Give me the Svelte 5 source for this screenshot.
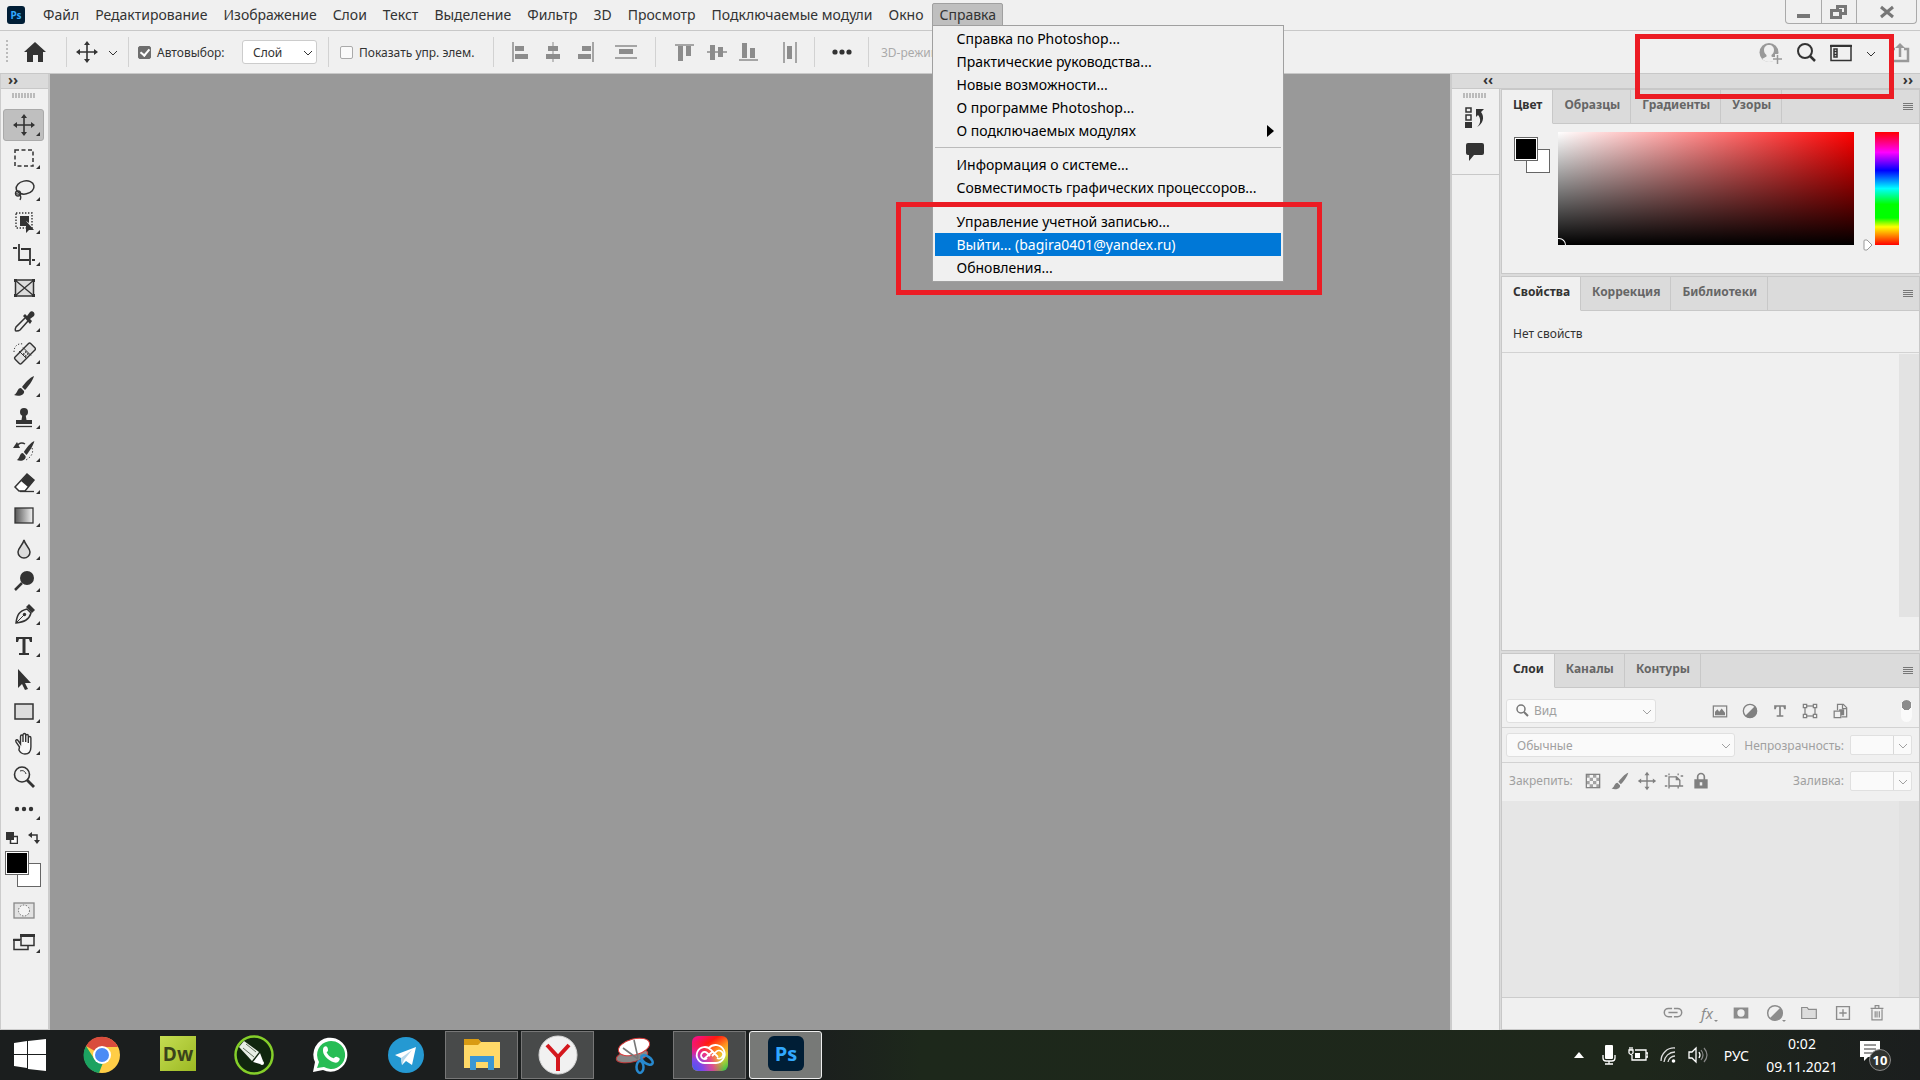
<script lang="ts">
  type Item = { label: string; icon: string; more?: boolean };

  const menus = [
    "Файл",
    "Редактирование",
    "Изображение",
    "Слои",
    "Текст",
    "Выделение",
    "Фильтр",
    "3D",
    "Просмотр",
    "Подключаемые модули",
    "Окно",
  ];

  const helpGroups = [
    [
      "Справка по Photoshop...",
      "Практические руководства...",
      "Новые возможности...",
      "О программе Photoshop...",
      "О подключаемых модулях",
    ],
    ["Информация о системе...", "Совместимость графических процессоров..."],
    [
      "Управление учетной записью...",
      "Выйти... (bagira0401@yandex.ru)",
      "Обновления...",
    ],
  ];
  const submenu = "О подключаемых модулях";
  const selected = "Выйти... (bagira0401@yandex.ru)";

  const move =
    '<path d="M12 4v16M4 12h16" stroke="currentColor" stroke-width="1.6"/><path d="M12 1l3 4H9zM12 23l3-4H9zM1 12l4-3v6zM23 12l-4-3v6z" fill="currentColor"/>';
  const brush =
    '<path d="M22 2c-4 1-10 8-12 11l3 3C16 13 21 6 22 2z" fill="currentColor"/><path d="M9 14c-4 0-3 5-7 7 5 2 11 0 10-4z" fill="currentColor"/>';
  const halfCircle =
    '<circle cx="12" cy="12" r="8" fill="none" stroke="currentColor" stroke-width="1.6"/><path d="M18 6A8.500 8.500 0 0 1 6 18z" fill="currentColor"/>';

  const tools: Item[] = [
    { label: "Перемещение", more: true, icon: move },
    {
      label: "Прямоугольная область",
      more: true,
      icon: '<rect x="3" y="4" width="18" height="16" fill="none" stroke="currentColor" stroke-width="1.500" stroke-dasharray="4 2.500"/>',
    },
    {
      label: "Лассо",
      more: true,
      icon: '<ellipse cx="13" cy="9.500" rx="9" ry="6.500" transform="rotate(-12 13 9)" fill="none" stroke="currentColor" stroke-width="1.500"/><circle cx="6" cy="15.500" r="2.500" fill="none" stroke="currentColor" stroke-width="1.300"/><path d="M3 16c5-1 7 2 5 6" fill="none" stroke="currentColor" stroke-width="1.300"/>',
    },
    {
      label: "Выделение объектов",
      more: true,
      icon: '<rect x="4" y="2" width="16" height="15" fill="none" stroke="currentColor" stroke-width="1.400" stroke-dasharray="1.400 1.600"/><path d="M8 5h9v7l-3-2v5H8z" fill="currentColor"/><path d="M14 10v12l3-3h5z" fill="currentColor"/>',
    },
    {
      label: "Рамка",
      more: true,
      icon: '<path d="M1 5h4M7 1v16h10M9 6h9v16M20 17h3" fill="none" stroke="currentColor" stroke-width="1.800"/>',
    },
    {
      label: "Кадр",
      icon: '<rect x="3.500" y="4" width="18" height="16" fill="#dcdcdc" stroke="currentColor" stroke-width="1.500"/><path d="M3 4l19 16M22 4L3 20" stroke="currentColor" stroke-width="1.300"/><path d="M2 3h3v3H2zM20 3h3v3h-3zM2 18h3v3H2zM20 18h3v3h-3z" fill="currentColor"/>',
    },
    {
      label: "Пипетка",
      more: true,
      icon: '<path d="M13 9L4 18c-1 2-1 4 0 4s3 0 4-1l8-9" fill="none" stroke="currentColor" stroke-width="1.500"/><path d="M11 7l2-2 2 2 3-4c2-2 6 1 4 4l-4 3 2 2-2 3z" fill="currentColor"/>',
    },
    {
      label: "Восстанавливающая кисть",
      more: true,
      icon: '<rect x="2" y="8" width="22" height="9" rx="1.500" transform="rotate(-45 13 12.500)" fill="#e2e2e2" stroke="currentColor" stroke-width="1.400"/><path d="M9 9l8 8M13 5.500l8 8" transform="translate(-2 1)" stroke="currentColor"/><path d="M11 13h1.500M13 11h1.500M13 15h1.500M15 13h1.500" stroke="currentColor" stroke-width="1.500"/><path d="M2 11c0-6 4-9 9-8" fill="none" stroke="currentColor" stroke-dasharray="1.200 1.800"/>',
    },
    { label: "Кисть", more: true, icon: brush },
    {
      label: "Штамп",
      more: true,
      icon: '<circle cx="12" cy="6" r="4" fill="currentColor"/><path d="M10.500 8h3l1 6H20v4H4v-4h5.500z" fill="currentColor"/><path d="M4 20.500h16" stroke="currentColor" stroke-width="1.300"/>',
    },
    {
      label: "Архивная кисть",
      more: true,
      icon: '<g transform="translate(3 0) scale(.88 1)">' +
        brush +
        '</g><path d="M4 8c2-4 6-5 9-3" fill="none" stroke="currentColor" stroke-width="1.400"/><path d="M1 9l4-6 3 6z" fill="currentColor"/><path d="M20 9c2 5-1 9-6 12" fill="none" stroke="currentColor" stroke-dasharray="1.300 2"/>',
    },
    {
      label: "Ластик",
      more: true,
      icon: '<path d="M3 16L15 3l7 6-9 11H7z" fill="#fff" stroke="currentColor" stroke-width="1.500"/><path d="M9 10l6-7 7 6-6 7z" fill="currentColor"/><path d="M8 20.500h14" stroke="currentColor" stroke-width="1.300"/>',
    },
    {
      label: "Градиент",
      more: true,
      icon: '<defs><linearGradient id="toolGradient"><stop stop-color="#555"/><stop offset="1" stop-color="#f5f5f5"/></linearGradient></defs><rect x="3" y="4" width="18" height="15" fill="url(#toolGradient)" stroke="currentColor" stroke-width="1.300"/>',
    },
    {
      label: "Размытие",
      more: true,
      icon: '<path d="M12 3c1 5 6 8 6 12a6 6 0 0 1-12 0c0-4 5-7 6-12z" fill="#dcdcdc" stroke="currentColor" stroke-width="1.500"/>',
    },
    {
      label: "Осветлитель",
      more: true,
      icon: '<circle cx="15" cy="9" r="7" fill="currentColor"/><path d="M10 14l-7 7" stroke="currentColor" stroke-width="2.500"/>',
    },
    {
      label: "Перо",
      more: true,
      icon: '<path d="M4 21c1-8 3-12 11-14l4 4c-2 7-7 9-15 10z" fill="none" stroke="currentColor" stroke-width="1.500"/><path d="M4 21l8-8" stroke="currentColor"/><circle cx="12.500" cy="12.500" r="1.700" fill="currentColor"/><path d="M14 5l3-3 6 6-3 3z" fill="currentColor"/>',
    },
    {
      label: "Горизонтальный текст",
      more: true,
      icon: '<path d="M4 3h16v5h-2l-1-3h-3.500v14H17v2H7v-2h3.500V5H7L6 8H4z" fill="currentColor"/>',
    },
    {
      label: "Выделение контура",
      more: true,
      icon: '<path d="M6 2v19l4-4 3 6 3-1-3-6h6z" fill="currentColor"/>',
    },
    {
      label: "Прямоугольник",
      more: true,
      icon: '<rect x="3" y="4" width="18" height="15" fill="#dcdcdc" stroke="currentColor" stroke-width="1.500"/>',
    },
    {
      label: "Рука",
      more: true,
      icon: '<path d="M6.500 15L3 10c-1-2 1-3 2-1.500L7.500 12V4.500c0-2 2.500-2 2.500 0V10 3c0-2 2.700-2 2.700 0v7V4c0-2 2.600-2 2.600 0v7-5c0-2 2.600-2 2.600 0v9c0 4-2 7-6 7-3 0-5-2-6-4z" transform="translate(1 0)" fill="#f8f8f8" stroke="currentColor" stroke-width="1.400"/>',
    },
    {
      label: "Масштаб",
      icon: '<circle cx="10" cy="9.500" r="7.500" fill="none" stroke="currentColor" stroke-width="1.600"/><path d="M8 6c3-1 5 0 6 3" fill="none" stroke="currentColor"/><path d="M15 15l7 7" stroke="currentColor" stroke-width="2.800"/>',
    },
    {
      label: "Редактировать панель инструментов",
      more: true,
      icon: '<circle cx="5" cy="12" r="2.200" fill="currentColor"/><circle cx="12" cy="12" r="2.200" fill="currentColor"/><circle cx="19" cy="12" r="2.200" fill="currentColor"/>',
    },
  ];

  const alignGroups: Item[][] = [
    [
      {
        label: "Выравнивание по левому краю",
        icon: '<path d="M4 2v20" stroke="currentColor" stroke-width="1.500"/><path d="M6 6h9v5H6zM6 14h13v5H6z" fill="currentColor"/>',
      },
      {
        label: "Центры по горизонтали",
        icon: '<path d="M12 2v20" stroke="currentColor"/><path d="M7 6h10v5H7zM5 14h14v5H5z" fill="currentColor"/>',
      },
      {
        label: "Выравнивание по правому краю",
        icon: '<path d="M20 2v20" stroke="currentColor" stroke-width="1.500"/><path d="M9 6h9v5H9zM5 14h13v5H5z" fill="currentColor"/>',
      },
    ],
    [
      {
        label: "Распределить по вертикали",
        icon: '<path d="M1 6h22M1 18h22" stroke="currentColor" stroke-width="1.500"/><path d="M5 9h14v5H5z" fill="currentColor"/>',
      },
    ],
    [
      {
        label: "По верхнему краю",
        icon: '<path d="M2 5h19" stroke="currentColor" stroke-width="1.500"/><path d="M5 6h5v15H5zM13 6h5v10h-5z" fill="currentColor"/>',
      },
      {
        label: "Центры по вертикали",
        icon: '<path d="M2 12h20" stroke="currentColor" stroke-width="1.500"/><path d="M5 5h5v15H5zM13 7h5v10h-5z" fill="currentColor"/>',
      },
      {
        label: "По нижнему краю",
        icon: '<path d="M2 20h19" stroke="currentColor" stroke-width="1.500"/><path d="M5 3h5v15H5zM13 8h5v10h-5z" fill="currentColor"/>',
      },
    ],
    [
      {
        label: "Распределить по горизонтали",
        icon: '<path d="M6 2v21M18 2v21" stroke="currentColor" stroke-width="1.500"/><path d="M9 6h5v13H9z" fill="currentColor"/>',
      },
    ],
  ];

  const filters: Item[] = [
    {
      label: "Пиксельные слои",
      icon: '<rect x="4" y="6" width="16" height="13" fill="none" stroke="currentColor" stroke-width="1.500"/><path d="M6 17v-4l3-3 2 3 3-4 4 5v3z" fill="currentColor"/>',
    },
    { label: "Корректирующие слои", icon: halfCircle },
    {
      label: "Текстовые слои",
      icon: '<path d="M5 5h14v5h-2l-1-3h-3v10h3v2H8v-2h3V7H8l-1 3H5z" fill="currentColor"/>',
    },
    {
      label: "Слои-фигуры",
      icon: '<rect x="6" y="6" width="12" height="12" fill="none" stroke="currentColor" stroke-width="1.500"/><path d="M4 4h4v4H4zM16 4h4v4h-4zM4 16h4v4H4zM16 16h4v4h-4z" fill="#f0f0f0" stroke="currentColor" stroke-width="1.500"/>',
    },
    {
      label: "Смарт-объекты",
      icon: '<path d="M9 11V4h7l4 4v11h-6M15 4v5h5" fill="none" stroke="currentColor" stroke-width="1.500"/><path d="M5 12h8v8H5z" fill="none" stroke="currentColor" stroke-width="1.500"/><path d="M11 10h6v7h-4v-5h-2z" fill="currentColor"/>',
    },
  ];

  const locks: Item[] = [
    {
      label: "Прозрачные пиксели",
      icon: '<rect x="4" y="4" width="16" height="16" fill="#f4f4f4" stroke="currentColor" stroke-width="1.500"/><path d="M4 4h4v4H4zM12 4h4v4h-4zM8 8h4v4H8zM16 8h4v4h-4zM4 12h4v4H4zM12 12h4v4h-4zM8 16h4v4H8zM16 16h4v4h-4z" fill="currentColor" fill-opacity=".7"/>',
    },
    { label: "Пиксели изображения", icon: brush },
    { label: "Положение", icon: move },
    {
      label: "Монтажная область",
      icon: '<path d="M1 6h3M6 3v2M1 18h3M6 19v2M17 19v2M19 18h4M6 7h9l4 4v7H6zM17 3v2M20 6h3" fill="none" stroke="currentColor" stroke-width="1.600"/><path d="M14 6v5h5z" fill="currentColor"/>',
    },
    {
      label: "Закрепить все",
      icon: '<path d="M8 11V7a4 4 0 0 1 8 0v4" fill="none" stroke="currentColor" stroke-width="2"/><path d="M4 10h16v11H4zM10.500 13.500v4h3v-4z" fill="currentColor" fill-rule="evenodd"/>',
    },
  ];

  const layerActions: Item[] = [
    {
      label: "Связать слои",
      icon: '<path d="M11 7H7a4.500 4.500 0 0 0 0 9h4M13 7h4a4.500 4.500 0 0 1 0 9h-4M7 11.500h10" fill="none" stroke="currentColor" stroke-width="1.600"/>',
    },
    { label: "fx", icon: "", more: true },
    {
      label: "Добавить маску",
      icon: '<path d="M4 6h16v12H4zM12 8a4 4 0 1 0 0 8 4 4 0 0 0 0-8z" fill="currentColor" fill-rule="evenodd"/>',
    },
    { label: "Корректирующий слой", icon: halfCircle, more: true },
    {
      label: "Создать группу",
      icon: '<path d="M4 18V6h6l1.500 2H20v10z" fill="#dcdcdc" stroke="currentColor" stroke-width="1.300"/>',
    },
    {
      label: "Создать слой",
      icon: '<path d="M5 5h14v14H5zM12 8v8M8 12h8" fill="none" stroke="currentColor" stroke-width="1.500"/>',
    },
    {
      label: "Удалить слой",
      icon: '<path d="M5 7h14M10 7V4h4v3M6.500 8v11.500h11V8M10 10v7M12 10v7M14.500 10v7" fill="none" stroke="currentColor" stroke-width="1.300"/>',
    },
  ];

  const apps: (Item & { state?: string })[] = [
    {
      label: "Google Chrome",
      icon: '<circle cx="20" cy="20" r="18" fill="#ffcd46"/><path d="M20 20L4 11A18 18 0 0 1 36 12H20z" fill="#d94c3d"/><path d="M4 11l9 14 9 0-5 13A18 18 0 0 1 4 11z" fill="#1ca261"/><circle cx="20" cy="20" r="9" fill="#fff"/><circle cx="20" cy="20" r="7" fill="#4c8bf5"/>',
    },
    {
      label: "Dreamweaver",
      icon: '<defs><linearGradient id="dw" x2="1" y2="1"><stop stop-color="#c5dd52"/><stop offset="1" stop-color="#9cb923"/></linearGradient></defs><rect x="2" y="1" width="36" height="35" fill="url(#dw)"/><text x="20" y="26" text-anchor="middle" font-family="Open Sans, sans-serif" font-size="19" font-weight="700" fill="#3a431b">Dw</text>',
    },
    {
      label: "CorelDRAW",
      icon: '<circle cx="20" cy="20" r="18.500" fill="#10260e" stroke="#85cf2a" stroke-width="2.500"/><path d="M5 12l5-6 15 11-7 9z" fill="#e8eee5"/><path d="M9 13l11 9M12 9l10 8" stroke="#61705d"/><path d="M19 27l7-9 3 8-3 3z" fill="#fff"/><circle cx="28" cy="28" r="2" fill="#fff"/>',
    },
    {
      label: "WhatsApp",
      icon: '<path d="M3 37l2-10A17 17 0 1 1 13 35z" fill="#fff"/><path d="M7 33l2-6A14 14 0 1 1 14 32z" fill="#27bd55"/><path d="M14 12c2-2 4 0 4 3 0 2-2 2-1 3 2 3 3 4 6 5 1 1 2-2 4-1 4 1 3 3 1 5-4 3-15-5-15-11 0-2 0-3 1-4z" fill="#fff"/>',
    },
    {
      label: "Telegram",
      icon: '<circle cx="20" cy="20" r="18" fill="#2599d2"/><path d="M9 20l21-8-4 18-6-4-4 4-1-7z" fill="#fff"/><path d="M15 23l11-8-8 10-2 5z" fill="#b7d8eb"/>',
    },
    {
      label: "Проводник",
      state: "open",
      icon: '<path d="M2 4h14l3 3h19v26H2z" fill="#ffd968"/><path d="M2 4h14l3 3-3 3H2z" fill="#d99b12"/><path d="M8 35V21h24v14h-6v-8H14v8z" fill="#3b97d3"/>',
    },
    {
      label: "Яндекс.Браузер",
      state: "open",
      icon: '<circle cx="20" cy="20" r="19" fill="#f1f1f1" stroke="#d5d5d5"/><path d="M9 10l11 12v14M20 22l11-12" fill="none" stroke="#d4171d" stroke-width="4"/>',
    },
    {
      label: "Ножницы",
      icon: '<ellipse cx="18" cy="21" rx="16" ry="6" transform="rotate(-12 18 21)" fill="#888" stroke="#c43b3b"/><ellipse cx="20" cy="12" rx="16" ry="8" transform="rotate(-15 20 12)" fill="#fff" stroke="#d93b3b"/><path d="M9 13l15 11M20 5l4 18" stroke="#777" stroke-width="1.600"/><ellipse cx="26" cy="32" rx="3.500" ry="6" fill="none" stroke="#2789cf" stroke-width="2.500"/><ellipse cx="33" cy="25" rx="6.500" ry="3.500" transform="rotate(35 33 25)" fill="none" stroke="#2789cf" stroke-width="2.500"/>',
    },
    {
      label: "Creative Cloud",
      state: "open",
      icon: '<defs><linearGradient id="cc" x1=".2" x2=".9" y2="1"><stop stop-color="#f5107c"/><stop offset=".25" stop-color="#ff1a10"/><stop offset=".5" stop-color="#ff9020"/><stop offset=".7" stop-color="#e8d430"/><stop offset="1" stop-color="#3cc04a"/></linearGradient><radialGradient id="ccb" cx="0" cy="1" r=".9"><stop stop-color="#3a5cf0"/><stop offset=".35" stop-color="#8048e8"/><stop offset=".65" stop-color="#e020b0" stop-opacity=".75"/><stop offset="1" stop-color="#ff2060" stop-opacity="0"/></radialGradient></defs><rect x="2" y="1" width="36" height="35" rx="6" fill="url(#cc)"/><rect x="2" y="1" width="36" height="35" rx="6" fill="url(#ccb)"/><path d="M15 28h11a9 9 0 1 0-7-15M15 28a8 8 0 1 1 6-13l7 7M22 17l-8 7M22 21l4-4a4 4 0 1 1 1 6M17 23a3.500 3.500 0 1 1 0-5l3 3" fill="none" stroke="#fff" stroke-width="1.800"/>',
    },
    {
      label: "Photoshop",
      state: "active",
      icon: '<rect x="2" y="1" width="36" height="35" rx="6" fill="#001e36"/><text x="20" y="26" text-anchor="middle" font-family="Open Sans, sans-serif" font-size="20" font-weight="700" fill="#31a8ff">Ps</text>',
    },
  ];
</script>

{#snippet icon(body: string, size = 24, box = 24)}
  <svg width={size} height={size} viewBox="0 0 {box} {box}" aria-hidden="true">
    {@html body}
  </svg>
{/snippet}

{#snippet chevron()}
  <svg class="chevron" width="10" height="10" viewBox="0 0 10 10" aria-hidden="true">
    <path d="M1 4l4 4 4-4" fill="none" stroke="currentColor" />
  </svg>
{/snippet}

{#snippet tabs(names: string[])}
  <div class="tabs" role="tablist">
    {#each names as name, i}
      <button class="tab" class:current={i === 0} role="tab" aria-selected={i === 0}>{name}</button>
    {/each}
    <button class="flyout" aria-label="Меню панели">
      <svg width="10" height="8" viewBox="0 0 10 8">
        <path d="M0 .5h10M0 2.500h10M0 4.500h10M0 6.500h10" stroke="#777" />
      </svg>
    </button>
  </div>
{/snippet}

<div class="app">
  <header class="menubar">
    <svg width="18" height="18" viewBox="0 0 18 18" aria-label="Photoshop">
      <rect width="18" height="18" rx="3" fill="#001e36" />
      <text x="9" y="13" text-anchor="middle" font-size="10" font-weight="700" fill="#31a8ff">Ps</text>
    </svg>
    <nav class="menus">
      {#each menus as menu}
        <button class="menu">{menu}</button>
      {/each}
      <div class="menu-wrap">
        <button class="menu opened" aria-expanded="true">Справка</button>
        <div class="dropdown" role="menu">
          {#each helpGroups as group}
            <div class="group">
              {#each group as item}
                <button class="entry" class:selected={item === selected} role="menuitem">
                  {item}
                  {#if item === submenu}
                    <svg width="7" height="12" viewBox="0 0 7 12"><path d="M0 0l7 6-7 6z" /></svg>
                  {/if}
                </button>
              {/each}
            </div>
          {/each}
        </div>
      </div>
    </nav>
    <div class="window-buttons">
      <button aria-label="Свернуть">
        <svg width="18" height="18" viewBox="0 0 18 18"><path d="M2 11h13v4H2z" fill="#777" /></svg>
      </button>
      <button aria-label="Восстановить">
        <svg width="18" height="18" viewBox="0 0 18 18">
          <path d="M7.500 7V3.500h8v7H12M1.500 7.500h9v7h-9z" fill="none" stroke="#777" stroke-width="3" />
        </svg>
      </button>
      <button class="close" aria-label="Закрыть">
        <svg width="18" height="18" viewBox="0 0 18 18">
          <path d="M3 4l12 10M15 4L3 14" stroke="#777" stroke-width="3" />
        </svg>
      </button>
    </div>
  </header>

  <div class="options">
    <span class="grip-v"></span>
    <button class="home" aria-label="Главная">
      <svg width="22" height="22" viewBox="0 0 22 22">
        <path d="M11 1l11 10h-3v10h-5v-7H9v7H3V11H0z" fill="#333" />
      </svg>
    </button>
    <span class="rule"></span>
    <button class="preset" aria-label="Перемещение">
      {@render icon(move)}
      {@render chevron()}
    </button>
    <span class="rule"></span>
    <label class="check first"><input type="checkbox" checked />Автовыбор:</label>
    <span class="select auto">
      <select aria-label="Автовыбор"><option>Слой</option></select>
      {@render chevron()}
    </span>
    <span class="rule"></span>
    <label class="check second"><input type="checkbox" />Показать упр. элем.</label>
    <span class="rule"></span>
    <div class="aligns">
      {#each alignGroups as group, i}
        {#if i === 2}<span class="rule"></span>{/if}
        <div class="align-group">
          {#each group as item}
            <button aria-label={item.label}>{@render icon(item.icon)}</button>
          {/each}
        </div>
      {/each}
    </div>
    <span class="rule"></span>
    <button class="dots" aria-label="Параметры выравнивания">
      <svg width="20" height="6" viewBox="0 0 20 6" fill="#333">
        <circle cx="3" cy="3" r="2.600" /><circle cx="10" cy="3" r="2.600" /><circle cx="17" cy="3" r="2.600" />
      </svg>
    </button>
    <span class="rule"></span>
    <span class="mode">3D-режим:</span>
    <div class="right-tools">
      <button aria-label="Пригласить">
        <svg width="24" height="24" viewBox="0 0 24 24">
          <circle cx="11" cy="11.500" r="9.500" fill="#999" />
          <path d="M11 4c-3 0-5 2-5 5 0 2 1 4 2.500 5v1.500L4 18c4 4 10 4 14 0l-4.500-2.500V14C15 13 16 11 16 9c0-3-2-5-5-5z" fill="#f0f0f0" />
          <path d="M14 18h10M19 13v10" stroke="#f0f0f0" stroke-width="4" />
          <path d="M15 18h9M19.500 14v9" stroke="#999" stroke-width="1.500" />
        </svg>
      </button>
      <button aria-label="Поиск">
        <svg width="20" height="20" viewBox="0 0 20 20">
          <circle cx="9" cy="8" r="7" fill="none" stroke="#333" stroke-width="2" />
          <path d="M14 13l5 5" stroke="#333" stroke-width="2.500" />
        </svg>
      </button>
      <button aria-label="Рабочая среда">
        <svg width="22" height="18" viewBox="0 0 22 18">
          <path d="M1 1.500h20v15H1zM4 5h3v8H4zM4 7.500h3M4 10.500h3" fill="none" stroke="#333" stroke-width="1.500" />
          <path d="M0 1h22v2H0z" fill="#333" />
        </svg>
      </button>
      <button aria-label="Список сред">{@render chevron()}</button>
      <button aria-label="Экспорт">
        <svg width="20" height="20" viewBox="0 0 20 20">
          <path d="M5 6H2v12h16V6h-4M10 14V4" fill="none" stroke="#999" stroke-width="2.500" />
          <path d="M10 0l5 5H5z" fill="#999" />
        </svg>
      </button>
    </div>
  </div>

  <main class="workspace">
    <aside class="toolbar">
      <div class="strip"><span>››</span></div>
      <span class="grip-h"></span>
      <div class="tools">
        {#each tools as tool, i}
          <button class="tool" class:active={i === 0} aria-label={tool.label}>
            {@render icon(tool.icon)}
            {#if tool.more}<i class="corner"></i>{/if}
          </button>
        {/each}
      </div>
      <div class="swap">
        <button aria-label="Цвета по умолчанию">
          <svg width="12" height="12" viewBox="0 0 12 12">
            <path d="M4.500 4.500h7v7h-7z" fill="#fff" stroke="#333" stroke-width="1.500" />
            <path d="M0 0h8v8H0z" fill="#333" />
          </svg>
        </button>
        <button aria-label="Поменять цвета">
          <svg width="12" height="12" viewBox="0 0 12 12">
            <path d="M2 3h7v7" fill="none" stroke="#333" stroke-width="1.500" />
            <path d="M0 3l4-3v6zM9 12l-3-4h6z" fill="#333" />
          </svg>
        </button>
      </div>
      <div class="swatches">
        <button class="fore" aria-label="Основной цвет"></button>
        <button class="back" aria-label="Фоновый цвет"></button>
      </div>
      <button class="tool" aria-label="Быстрая маска">
        <svg width="22" height="17" viewBox="0 0 22 17">
          <rect x="1" y="1" width="20" height="15" fill="#e2e2e2" stroke="#888" stroke-width="1.300" />
          <circle cx="11" cy="8.500" r="5.500" fill="#f4f4f4" stroke="#666" stroke-dasharray="1.500 1.500" />
        </svg>
      </button>
      <button class="tool" aria-label="Режим экрана">
        <svg width="22" height="17" viewBox="0 0 22 17">
          <path d="M1 5.500h14v10H1z" fill="#f0f0f0" stroke="#333" stroke-width="1.500" />
          <path d="M8 1.500h13v10H8z" fill="#f0f0f0" stroke="#333" stroke-width="1.500" />
          <path d="M7 0h15v3H7zM0 5h7v2H0z" fill="#333" />
        </svg>
        <i class="corner"></i>
      </button>
    </aside>

    <section class="canvas" aria-label="Холст"></section>

    <aside class="dock">
      <div class="strip"><span>‹‹</span><span>››</span></div>
      <div class="dock-body">
        <div class="collapsed">
          <div class="collapsed-icons">
            <span class="grip-h"></span>
            <button aria-label="История">
              <svg width="20" height="22" viewBox="0 0 20 22">
                <path d="M1 1h5v4H1zM1 8h5v5H1z" fill="none" stroke="#333" stroke-width="1.500" />
                <path d="M0 15h7v6H0z" fill="#333" />
                <path d="M12 20c4-3 4-9 1-12l-2 2V2l8 0-3 3c4 5 2 12-4 15z" fill="#333" />
              </svg>
            </button>
            <button aria-label="Комментарии">
              <svg width="20" height="20" viewBox="0 0 20 20">
                <path d="M3 1h14q2 0 2 2v8q0 2-2 2H9l-5 6v-6H3q-2 0-2-2V3q0-2 2-2z" fill="#333" />
              </svg>
            </button>
          </div>
        </div>
        <div class="panels">
          <section class="panel color">
            {@render tabs(["Цвет", "Образцы", "Градиенты", "Узоры"])}
            <div class="picker">
              <div class="swatches">
                <button class="fore" aria-label="Основной цвет"></button>
                <button class="back" aria-label="Фоновый цвет"></button>
              </div>
              <div class="field"><span class="marker"></span></div>
              <div class="hue-wrap">
                <svg class="hue-arrow" width="10" height="12" viewBox="0 0 10 12">
                  <path d="M2 1q-1 0-1 1v8q0 1 1 1h2l5-5-5-5z" fill="#fff" stroke="#999" />
                </svg>
                <div class="hue"></div>
              </div>
            </div>
          </section>

          <section class="panel props">
            {@render tabs(["Свойства", "Коррекция", "Библиотеки"])}
            <p class="empty">Нет свойств</p>
            <div class="track"></div>
          </section>

          <section class="panel layers">
            {@render tabs(["Слои", "Каналы", "Контуры"])}
            <div class="row filter">
              <span class="select kind">
                <svg class="lens" width="13" height="13" viewBox="0 0 13 13">
                  <circle cx="5" cy="5" r="4" fill="none" stroke="#777" stroke-width="1.500" />
                  <path d="M8 8l4 4" stroke="#777" stroke-width="2" />
                </svg>
                <select aria-label="Фильтр слоев"><option>Вид</option></select>
                {@render chevron()}
              </span>
              <div class="filter-icons">
                {#each filters as item}
                  <button aria-label={item.label}>{@render icon(item.icon, 20)}</button>
                {/each}
              </div>
              <input class="toggle" type="checkbox" aria-label="Включить фильтрацию" />
            </div>
            <div class="row blend">
              <span class="select mode-select">
                <select aria-label="Режим наложения"><option>Обычные</option></select>
                {@render chevron()}
              </span>
              <label for="opacity">Непрозрачность:</label>
              <span class="number"><input id="opacity" /><button aria-label="Непрозрачность">{@render chevron()}</button></span>
            </div>
            <div class="row lock">
              <span>Закрепить:</span>
              <div class="lock-icons">
                {#each locks as item}
                  <button aria-label={item.label}>{@render icon(item.icon, 20)}</button>
                {/each}
              </div>
              <label for="fill">Заливка:</label>
              <span class="number"><input id="fill" /><button aria-label="Заливка">{@render chevron()}</button></span>
            </div>
            <div class="list"><div class="list-track"></div></div>
            <div class="actions">
              {#each layerActions as item}
                <button class:fx={item.label === "fx"} aria-label={item.label}>
                  {#if item.icon}{@render icon(item.icon, 22)}{:else}{item.label}{/if}
                  {#if item.more}<i class="arrow"></i>{/if}
                </button>
              {/each}
            </div>
          </section>
        </div>
      </div>
    </aside>
  </main>

  <footer class="taskbar">
    <button class="start" aria-label="Пуск">
      <svg width="32" height="32" viewBox="0 0 32 32" fill="#fff">
        <path d="M0 4l13-2v13H0zM14 2l18-2v15H14zM0 16h13v13L0 27zM14 16h18v16l-18-2z" />
      </svg>
    </button>
    {#each apps as app}
      <button class="task {app.state ?? ''}" aria-label={app.label}>
        {@render icon(app.icon, 40, 40)}
      </button>
    {/each}
    <div class="tray">
      <svg width="10" height="6" viewBox="0 0 10 6"><path d="M5 0l5 6H0z" fill="#fff" /></svg>
      <svg width="14" height="20" viewBox="0 0 14 20">
        <rect x="3" y="0" width="8" height="14" rx="1" fill="#fff" />
        <path d="M1 10v3q0 3 3 3h6q3 0 3-3v-3M7 16v3M3 19h8" fill="none" stroke="#fff" stroke-width="1.300" />
      </svg>
      <svg width="20" height="16" viewBox="0 0 20 16">
        <path d="M7 3h11v10H4V8M18 6h2v4h-2M1 3v3q2 3 4 0V3H1zM2 0v3M4 0v3" fill="none" stroke="#fff" stroke-width="1.300" />
        <path d="M7 6h5v5H7z" fill="#fff" />
      </svg>
      <svg width="16" height="16" viewBox="0 0 16 16">
        <path d="M1 14A13 13 0 0 1 15 1M4 15A11 11 0 0 1 15 5M8 15A7 7 0 0 1 15 9" fill="none" stroke="#ddd" stroke-width="1.300" />
        <circle cx="13.500" cy="14" r="1.800" fill="#fff" />
      </svg>
      <svg width="20" height="18" viewBox="0 0 20 18">
        <path d="M1 6h3l4-4v14l-4-4H1zM11 6q2 3 0 6" fill="none" stroke="#fff" stroke-width="1.300" />
        <path d="M13 4q4 5 0 10M16 2q6 7 0 14" fill="none" stroke="#888" stroke-width="1.200" />
      </svg>
      <button class="lang">РУС</button>
      <div class="clock"><time>0:02</time><time>09.11.2021</time></div>
      <button class="notes" aria-label="Уведомления">
        <svg width="32" height="32" viewBox="0 0 32 32">
          <path d="M0 2h20v16H8l-4 4v-4H0z" fill="#fff" />
          <path d="M4 6h12M4 10h12M4 14h8" stroke="#333" />
          <circle cx="20" cy="21" r="10.500" fill="#30332f" stroke="#888" />
          <text x="20" y="26" text-anchor="middle" font-size="13" font-weight="700" fill="#fff">10</text>
        </svg>
      </button>
    </div>
  </footer>

  <div class="callout account"></div>
  <div class="callout corner-area"></div>
</div>

<style>
  :global(body) {
    margin: 0;
  }

  .app {
    position: relative;
    display: flex;
    flex-direction: column;
    min-height: 100vh;
    background: #f0f0f0;
    color: #333;
    font-family: "Noto Sans", sans-serif;
    font-size: 12px;
    overflow: hidden;
  }

  .app * {
    box-sizing: border-box;
  }

  button {
    display: flex;
    align-items: center;
    justify-content: center;
    padding: 0;
    border: 0;
    background: none;
    color: inherit;
    font: inherit;
  }

  svg {
    display: block;
    flex: none;
  }

  .menubar {
    display: flex;
    gap: 11px;
    height: 31px;
    padding-left: 7px;
    border-bottom: 1px solid #c8c8c8;
  }

  .menubar > svg {
    margin-top: 6px;
  }

  .menus {
    display: flex;
    gap: 2px;
    padding-top: 3px;
    font-size: 14px;
  }

  .menu {
    height: 23px;
    padding: 0 7px;
    white-space: nowrap;
  }

  .menu-wrap {
    position: relative;
  }

  .opened {
    border: 1px solid #a0a0a0;
    border-radius: 2px 2px 0 0;
    background: #bfbfbf;
    padding: 0 6px;
  }

  .dropdown {
    position: absolute;
    z-index: 5;
    top: 22px;
    left: 0;
    width: 352px;
    padding: 1px 2px 2px;
    border: 1px solid #a0a0a0;
    background: #f0f0f0;
    color: #000;
  }

  .group + .group {
    margin-top: 5px;
    padding-top: 5px;
    border-top: 1px solid #bbb;
  }

  .entry {
    justify-content: space-between;
    width: 100%;
    height: 23px;
    padding: 0 7px 0 21px;
    white-space: nowrap;
  }

  .selected {
    background: #0078d7;
    color: #fff;
  }

  .window-buttons {
    display: flex;
    height: 24px;
    margin-left: auto;
    margin-right: 3px;
    border: 1px solid #aaa;
    border-top: 0;
    border-radius: 0 0 4px 4px;
  }

  .window-buttons button {
    width: 35px;
  }

  .window-buttons button + button {
    border-left: 1px solid #aaa;
  }

  .window-buttons .close {
    width: 60px;
  }

  .options {
    display: flex;
    align-items: center;
    height: 43px;
    padding-left: 6px;
    border-bottom: 1px solid #c8c8c8;
  }

  .grip-v {
    width: 2px;
    height: 24px;
    background: repeating-linear-gradient(#bbb 0 2px, transparent 2px 4px);
  }

  .home {
    width: 58px;
    padding-right: 4px;
  }

  .rule {
    width: 1px;
    height: 30px;
    background: #d2d2d2;
  }

  .preset {
    gap: 9px;
    width: 61px;
    padding-right: 2px;
  }

  .chevron {
    pointer-events: none;
  }

  .check {
    display: flex;
    align-items: center;
    gap: 6px;
    white-space: nowrap;
  }

  .check.first {
    width: 113px;
    padding-left: 9px;
  }

  .check.second {
    width: 164px;
    padding-left: 11px;
  }

  .check input {
    appearance: none;
    display: grid;
    place-items: center;
    width: 13px;
    height: 13px;
    margin: 0;
    border: 1px solid #aaa;
    border-radius: 2px;
    background: #fafafa;
  }

  .check input:checked {
    border-color: #6e6e6e;
    background: #6e6e6e;
  }

  .check input:checked::after {
    content: "";
    width: 4px;
    height: 7px;
    margin-bottom: 2px;
    border: solid #fff;
    border-width: 0 2px 2px 0;
    transform: rotate(40deg);
  }

  .select {
    display: grid;
    align-items: center;
  }

  .select > * {
    grid-area: 1 / 1;
  }

  .select .chevron {
    justify-self: end;
    margin-right: 4px;
  }

  select {
    appearance: none;
    width: 100%;
    height: 24px;
    padding: 0 10px;
    border: 1px solid #ccc;
    border-radius: 3px;
    background: #fff;
    color: inherit;
    font: inherit;
  }

  .auto {
    width: 75px;
    margin-right: 11px;
  }

  .aligns,
  .align-group {
    display: flex;
    align-items: center;
    color: #8c8c8c;
  }

  .aligns {
    padding: 0 12px 0 15px;
    gap: 17px;
  }

  .align-group {
    gap: 8px;
  }

  .dots {
    width: 53px;
  }

  .mode {
    padding-left: 12px;
    color: #aaa;
  }

  .right-tools {
    display: flex;
    align-items: center;
    gap: 14px;
    margin-left: auto;
    padding: 1px 10px 0 0;
  }

  .workspace {
    display: flex;
    flex: 1;
  }

  .toolbar {
    display: flex;
    flex-direction: column;
    width: 50px;
    border: 1px solid #ccc;
    border-top: 0;
    border-right-width: 2px;
  }

  .strip {
    display: flex;
    justify-content: space-between;
    height: 15px;
    padding: 0 7px;
    border-bottom: 1px solid #c8c8c8;
    background: #dbdbdb;
    font-size: 14px;
    font-weight: 700;
    line-height: 11px;
  }

  .grip-h {
    width: 24px;
    height: 5px;
    margin: 4px 11px 0;
    background: repeating-linear-gradient(90deg, #bbb 0 2px, transparent 2px 3px);
  }

  .tools {
    display: grid;
    grid-auto-rows: 1fr;
    height: 717px;
    margin-top: 11px;
  }

  .tool {
    position: relative;
    width: 41px;
    height: 32px;
    margin-left: 2px;
    border: 1px solid transparent;
  }

  .active {
    border-color: #aaa;
    border-radius: 3px;
    background: #bfbfbf;
  }

  .tool .corner {
    position: absolute;
    right: 3px;
    bottom: 4px;
    border-left: 4px solid transparent;
    border-bottom: 4px solid #333;
  }

  .swap {
    display: flex;
    gap: 10px;
    margin: 6px 5px 7px;
  }

  .swatches {
    display: grid;
    width: 36px;
    height: 36px;
  }

  .toolbar .swatches {
    margin: 0 4px 7px;
  }

  .swatches > * {
    grid-area: 1 / 1;
    width: 24px;
    height: 24px;
    border: 1px solid #666;
  }

  .fore {
    z-index: 1;
    background: #000;
    box-shadow: inset 0 0 0 1px #fff;
  }

  .back {
    place-self: end;
    background: #fff;
  }

  .canvas {
    flex: 1;
    background: #999;
  }

  .dock {
    display: flex;
    flex-direction: column;
    width: 470px;
    border-left: 2px solid #ccc;
  }

  .dock .strip {
    padding-left: 31px;
  }

  .dock-body {
    display: flex;
    flex: 1;
  }

  .collapsed {
    width: 48px;
    border-right: 1px solid #c8c8c8;
  }

  .collapsed-icons {
    display: flex;
    flex-direction: column;
    gap: 13px;
    height: 86px;
    border-bottom: 1px solid #c8c8c8;
  }

  .collapsed-icons button {
    width: 46px;
  }

  .collapsed-icons .grip-h {
    margin-bottom: -4px;
  }

  .panels {
    display: flex;
    flex: 1;
    flex-direction: column;
    gap: 2px;
    padding-left: 1px;
    background: #dbdbdb;
  }

  .panel {
    display: flex;
    flex-direction: column;
    border: 1px solid #c8c8c8;
    border-top: 0;
    background: #f0f0f0;
  }

  .tabs {
    display: flex;
    height: 35px;
    background: #dbdbdb;
    border-top: 1px solid #c8c8c8;
  }

  .tab {
    padding: 0 10px 4px 11px;
    border-right: 1px solid #c8c8c8;
    border-bottom: 1px solid #c8c8c8;
    color: #666;
    font-weight: 700;
  }

  .tab.current {
    border-bottom-color: #f0f0f0;
    background: #f0f0f0;
    color: #333;
  }

  .flyout {
    flex: 1;
    justify-content: flex-end;
    padding-right: 6px;
    border-bottom: 1px solid #c8c8c8;
  }

  .color {
    height: 185px;
  }

  .picker {
    display: flex;
    padding: 8px 20px 0 12px;
  }

  .picker .swatches {
    margin-top: 5px;
  }

  .field {
    display: flex;
    flex: 1;
    align-items: end;
    height: 113px;
    margin: 0 9px 0 8px;
    background: linear-gradient(transparent, #000), linear-gradient(90deg, #fff, #f00);
  }

  .marker {
    width: 8px;
    height: 7px;
    border: solid #fff;
    border-width: 1px 1px 0 0;
    border-radius: 0 7px 0 0;
  }

  .hue-wrap {
    display: flex;
    align-items: end;
    gap: 2px;
  }

  .hue-arrow {
    margin-bottom: -6px;
  }

  .hue {
    width: 24px;
    height: 113px;
    background: linear-gradient(#f00, #f0f 18%, #00f 34%, #0ff 50%, #0f0 64%, #0f0 76%, #ff0 84%, #f00);
  }

  .props {
    height: 375px;
  }

  .empty {
    height: 42px;
    margin: 0;
    padding-left: 11px;
    border-bottom: 1px solid #d2d2d2;
    line-height: 45px;
  }

  .track {
    align-self: flex-end;
    width: 20px;
    height: 263px;
    margin-top: 1px;
    background: #e3e3e3;
  }

  .layers {
    flex: 1;
    color: #a0a0a0;
  }

  .row {
    display: flex;
    align-items: center;
    height: 35px;
    padding: 0 7px 0 4px;
    white-space: nowrap;
  }

  .row + .row {
    border-top: 1px solid #d2d2d2;
  }

  .layers select {
    border-color: #e0e0e0;
    background: #fafafa;
  }

  .row.filter {
    height: 39px;
    padding-top: 6px;
  }

  .kind {
    width: 150px;
  }

  .kind select {
    padding-left: 27px;
  }

  .lens {
    z-index: 1;
    margin-left: 10px;
  }

  .filter-icons {
    display: flex;
    gap: 10px;
    margin: 0 auto 0 54px;
    color: #808080;
  }

  .toggle {
    appearance: none;
    width: 11px;
    height: 22px;
    margin: 0;
    border-radius: 6px;
    background: radial-gradient(circle at 50% 5px, #8c8c8c 5px, transparent 5px), #fafafa;
  }

  .mode-select {
    width: 229px;
    margin-right: auto;
  }

  .number {
    display: flex;
    width: 62px;
    height: 20px;
    margin-left: 6px;
    border: 1px solid #e0e0e0;
    border-radius: 2px;
    background: #fafafa;
  }

  .number input {
    width: 43px;
    padding: 0 3px;
    border: 0;
    border-right: 1px solid #d8d8d8;
    background: none;
    color: inherit;
    font: inherit;
  }

  .number button {
    flex: 1;
  }

  .row.lock {
    height: 39px;
    padding-left: 7px;
    padding-bottom: 3px;
  }

  .lock-icons {
    display: flex;
    gap: 7px;
    margin: 0 auto 0 10px;
    color: #808080;
  }

  .list {
    flex: 1;
    display: flex;
    justify-content: flex-end;
    background: #e6e6e6;
  }

  .list-track {
    width: 20px;
    background: #e1e1e1;
  }

  .actions {
    display: flex;
    justify-content: flex-end;
    gap: 12px;
    height: 32px;
    padding: 0 31px 2px 0;
    border-top: 1px solid #ccc;
    color: #8c8c8c;
  }

  .actions button {
    position: relative;
    width: 22px;
  }

  .fx {
    font-size: 15px;
    font-style: italic;
  }

  .arrow {
    position: absolute;
    right: 0;
    bottom: 5px;
    border: 2px solid transparent;
    border-top-color: #8c8c8c;
    border-bottom: 0;
  }

  .taskbar {
    display: flex;
    align-items: center;
    height: 50px;
    background: linear-gradient(90deg, #1b1e1e 0 42%, #1d281b 48%, #1e271b 85%, #1b1e1e);
    color: #fff;
  }

  .start {
    width: 60px;
    margin-right: 5px;
  }

  .task {
    width: 73px;
    height: 48px;
    margin-right: 3px;
    border: 1px solid transparent;
  }

  .task.open {
    border-color: #777;
    background: #484a4a;
  }

  .task.active {
    border-color: #eee;
    background: #777977;
  }

  .tray {
    display: flex;
    align-items: center;
    gap: 12px;
    margin-left: auto;
    padding-right: 22px;
    font-size: 14px;
  }

  .tray svg:first-child {
    margin-right: 6px;
  }

  .lang {
    margin-left: 4px;
  }

  .clock {
    display: flex;
    flex-direction: column;
    align-items: center;
    width: 80px;
    margin: 0 6px 0 1px;
    line-height: 23px;
  }

  .callout {
    position: absolute;
    z-index: 10;
    border: 5px solid #ec1c24;
    pointer-events: none;
  }

  .account {
    top: 202px;
    left: 896px;
    width: 426px;
    height: 93px;
  }

  .corner-area {
    top: 34px;
    right: 26px;
    width: 259px;
    height: 65px;
  }
</style>
